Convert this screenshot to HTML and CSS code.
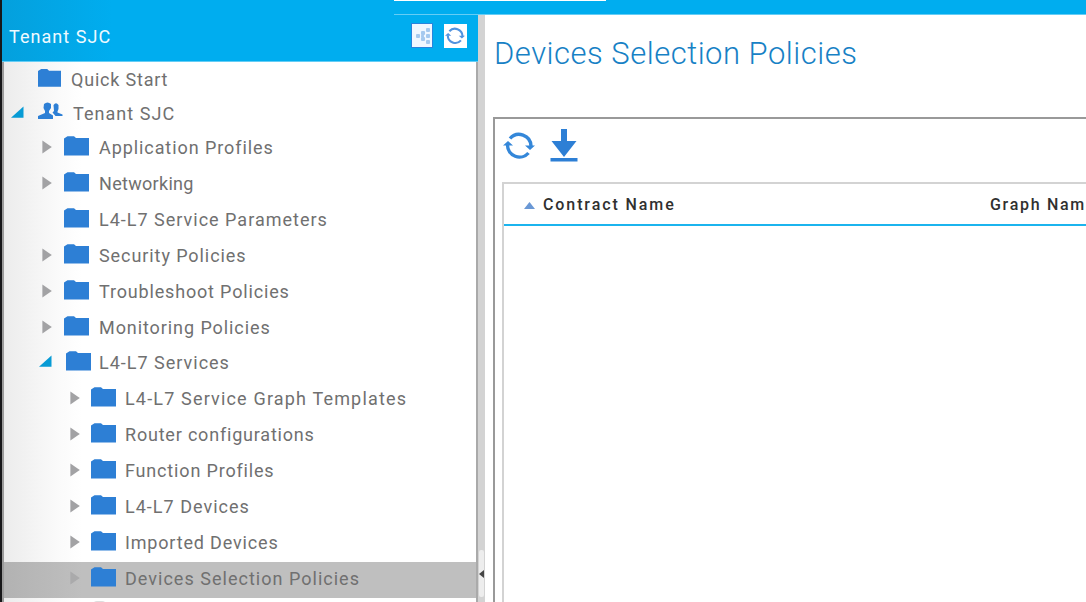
FILE: index.html
```
<!DOCTYPE html>
<html lang="en">
<head>
<meta charset="utf-8">
<title>Devices Selection Policies</title>
<link rel="stylesheet" href="styles.css">
</head>
<body>
<svg class="defs" width="0" height="0">
  <symbol id="folder" viewBox="0 0 25 20"><path d="M0 2.500L3.500.300H10L12 2H25V19.500H0z" fill="#2d7fd5"/></symbol>
  <symbol id="closed" viewBox="0 0 10 14"><path d="M.4.500L9.800 7L.4 13.500z" fill="#a2a2a4"/></symbol>
  <symbol id="open" viewBox="0 0 13 12"><path d="M12.500.500V11.700H0z" fill="#079bd5"/></symbol>
  <symbol id="refresh" viewBox="0 0 32 28"><g fill="none" stroke="currentColor" stroke-width="3.400"><path d="M7 6.500A12 12 0 0 1 28 14M25.500 21A12 12 0 0 1 4.500 13"/></g><path d="M22 13.500h10l-5 4.500zM0 13.500L5 9l5 4.500z" fill="currentColor"/></symbol>
</svg>
<div class="app">
  <aside class="sidebar">
    <header class="side-head">
      <span class="head-title">Tenant SJC</span>
      <span class="share"><svg width="18" height="20" viewBox="0 0 18 20"><g fill="#a5c9ef"><rect x="2" y="8" width="4" height="4" rx="1"/><rect x="7" y="5" width="4" height="4" rx="1"/><rect x="7" y="11" width="4" height="4" rx="1"/><rect x="7" y="8.500" width="3" height="3" rx="1"/><rect x="12" y="2" width="4" height="4" rx="1"/><rect x="12" y="8" width="4" height="4" rx="1"/><rect x="12" y="14" width="4" height="4" rx="1"/></g></svg></span>
      <span class="reload"><svg width="20" height="18"><use href="#refresh"/></svg></span>
    </header>
    <nav class="tree">
      <div class="row root quick"><svg class="folder"><use href="#folder"/></svg><span class="label">Quick Start</span></div>
      <div class="row root tenant"><svg class="open"><use href="#open"/></svg><svg class="users" viewBox="0 0 25 17"><g fill="#2d7fd5"><path d="M6 2Q9.500-1 13 2v4l-2 3v2l4 2.500V17H0v-3l7-3V9L5.500 6z"/><path d="M15.500 3Q18-.500 20.500 3v4l-1 2.500v1l5 2V14h-7l-3-3.500 1.500-1.500z"/></g></svg><span class="label">Tenant SJC</span></div>
      <div class="row one"><svg class="arrow"><use href="#closed"/></svg><svg class="folder"><use href="#folder"/></svg><span class="label">Application Profiles</span></div>
      <div class="row one"><svg class="arrow"><use href="#closed"/></svg><svg class="folder"><use href="#folder"/></svg><span class="label networking">Networking</span></div>
      <div class="row one"><span class="arrow"></span><svg class="folder"><use href="#folder"/></svg><span class="label params">L4-L7 Service Parameters</span></div>
      <div class="row one"><svg class="arrow"><use href="#closed"/></svg><svg class="folder"><use href="#folder"/></svg><span class="label">Security Policies</span></div>
      <div class="row one"><svg class="arrow"><use href="#closed"/></svg><svg class="folder"><use href="#folder"/></svg><span class="label troubleshoot">Troubleshoot Policies</span></div>
      <div class="row one"><svg class="arrow"><use href="#closed"/></svg><svg class="folder"><use href="#folder"/></svg><span class="label">Monitoring Policies</span></div>
      <div class="row services"><svg class="open"><use href="#open"/></svg><svg class="folder"><use href="#folder"/></svg><span class="label">L4-L7 Services</span></div>
      <div class="row two"><svg class="arrow"><use href="#closed"/></svg><svg class="folder"><use href="#folder"/></svg><span class="label templates">L4-L7 Service Graph Templates</span></div>
      <div class="row two"><svg class="arrow"><use href="#closed"/></svg><svg class="folder"><use href="#folder"/></svg><span class="label router">Router configurations</span></div>
      <div class="row two"><svg class="arrow"><use href="#closed"/></svg><svg class="folder"><use href="#folder"/></svg><span class="label function">Function Profiles</span></div>
      <div class="row two"><svg class="arrow"><use href="#closed"/></svg><svg class="folder"><use href="#folder"/></svg><span class="label devices">L4-L7 Devices</span></div>
      <div class="row two"><svg class="arrow"><use href="#closed"/></svg><svg class="folder"><use href="#folder"/></svg><span class="label imported">Imported Devices</span></div>
      <div class="row two selected"><svg class="arrow"><use href="#closed"/></svg><svg class="folder"><use href="#folder"/></svg><span class="label">Devices Selection Policies</span></div>
      <div class="next"></div>
    </nav>
  </aside>
  <div class="splitter"><span class="grip"><svg width="5" height="8"><path d="M0 4L5 0v8z" fill="#444"/></svg></span></div>
  <div class="right">
    <div class="topbar"><span class="search"></span></div>
    <main class="content">
      <h1>Devices Selection Policies</h1>
      <section class="panel">
        <div class="tools">
          <svg class="refresh"><use href="#refresh"/></svg>
          <svg class="download" viewBox="0 0 28 33"><path d="M11 0h6v12h9.500L14 28L1.500 12H11zM.5 29h27v3.500H.5z" fill="#2d7fd5"/></svg>
        </div>
        <div class="table">
          <div class="thead"><span class="col"><svg width="12" height="8"><path d="M0 7L5.500 0L11 7z" fill="#6a98d5"/></svg>Contract Name</span><span class="col2">Graph Nam</span></div>
        </div>
      </section>
    </main>
  </div>
</div>
</body>
</html>
```
FILE: styles.css
```
* { box-sizing: border-box; }
body { margin: 0; overflow: hidden; background: #fff; font: 18px/36px Roboto, "Liberation Sans", sans-serif; }
svg { display: block; flex: none; }
.defs { position: absolute; }
.app { display: flex; width: 1086px; height: 602px; }
.sidebar { width: 478px; flex: none; border-left: 2px solid #171719; display: flex; flex-direction: column; background: #00adef; }
.side-head { height: 62px; flex: none; display: flex; padding: 23px 11px 0 7px; background: linear-gradient(90deg, #04a0dd, #00adef 110px); border-bottom: 1px solid #65cdf5; color: #effaff; }
.head-title { flex: 1; height: 26px; line-height: 27px; letter-spacing: 1.05px; }
.share { width: 22px; height: 25px; padding: 2px; border: 1px solid #2984dc; background: #f0f7ff; margin-right: 11px; }
.reload { width: 23px; height: 24px; background: #fff; padding: 3px 1px; color: #5293df; margin-top: 1px; }
.tree { flex: 1; border-left: 2px solid #9b9b9b; border-right: 2px solid #aaa; background: linear-gradient(90deg, #ececec, #fafafa 54px, #fff 78px); overflow: hidden; }
.row { height: 36px; display: flex; color: #707070; white-space: nowrap; }
.row .folder { width: 25px; height: 20px; margin-top: 6px; }
.label { letter-spacing: .92px; line-height: 36px; margin-left: 10px; }
.root { height: 34px; }
.quick { padding-left: 34px; }
.quick .folder { width: 23px; }
.quick .label { letter-spacing: .8px; }
.tenant { padding-left: 7px; }
.open { width: 13px; height: 12px; margin-top: 10px; }
.users { width: 25px; height: 17px; margin: 6px 0 0 14px; }
.tenant .label { margin-left: 10px; letter-spacing: 1.05px; }
.arrow { width: 10px; height: 14px; margin: 10px 12px 0 0; }
.one { padding-left: 38px; }
.two { padding-left: 66px; }
.two .arrow { margin: 9px 11px 0 0; }
.row.two .folder { margin-top: 5px; }
.two .label { line-height: 34px; margin-left: 9px; }
.services { padding-left: 35px; }
.services .folder { margin-left: 14px; margin-top: 5px; }
.services .open { margin-top: 9px; }
.services .label { margin-left: 8px; line-height: 34px; letter-spacing: 1px; }
.label.networking { letter-spacing: .3px; }
.label.params { letter-spacing: 1px; }
.label.troubleshoot { letter-spacing: .83px; }
.label.templates { letter-spacing: 1.17px; }
.label.router { letter-spacing: .8px; }
.label.function { letter-spacing: .83px; }
.label.imported { letter-spacing: .83px; }
.label.devices, .selected .label { letter-spacing: 1.02px; }
.selected { background: linear-gradient(90deg, #b2b2b2, #bfbfbf 78px); }
.selected .arrow { opacity: .7; }
.next { width: 15px; height: 5px; margin: 3px 0 0 88px; border-radius: 5px 5px 0 0; background: #ddd; }
.splitter { width: 7px; flex: none; margin-top: 14px; background: #d3d3d3; display: flex; align-items: flex-end; }
.grip { width: 5px; height: 47px; margin: 0 0 5px 1px; border-radius: 2px; background: #ededed; display: flex; align-items: center; }
.right { flex: 1; min-width: 0; display: flex; flex-direction: column; }
.topbar { height: 15px; flex: none; background: #00adef; margin-left: -91px; border-bottom: 1px solid #65cdf5; }
.search { display: block; width: 212px; height: 1px; background: #fff; }
.content { flex: 1; min-height: 0; padding-left: 8px; overflow: hidden; }
h1 { margin: 0; height: 102px; padding: 18px 0 0 1px; color: #1781c5; font-size: 31px; font-weight: 300; line-height: 41px; letter-spacing: .5px; white-space: nowrap; }
.panel { height: 500px; border: 2px solid #999; border-right: 0; padding: 11px 0 0 7px; }
.tools { display: flex; height: 52px; padding-left: 1px; }
.refresh { width: 32px; height: 28px; color: #3487d9; margin-top: 2px; }
.download { width: 28px; height: 33px; margin-left: 15px; margin-top: -1px; }
.table { height: 450px; border: 2px solid #d3d3d3; border-right: 0; }
.thead { height: 42px; border-bottom: 2px solid #1bb4ee; display: flex; font-size: 16px; font-weight: 500; line-height: 42px; letter-spacing: 1.9px; color: #303030; padding-left: 20px; white-space: nowrap; overflow: hidden; }
.col { width: 466px; flex: none; display: flex; }
.col svg { margin: 18px 7px 0 0; }
.col2 { letter-spacing: 1.7px; }
```
